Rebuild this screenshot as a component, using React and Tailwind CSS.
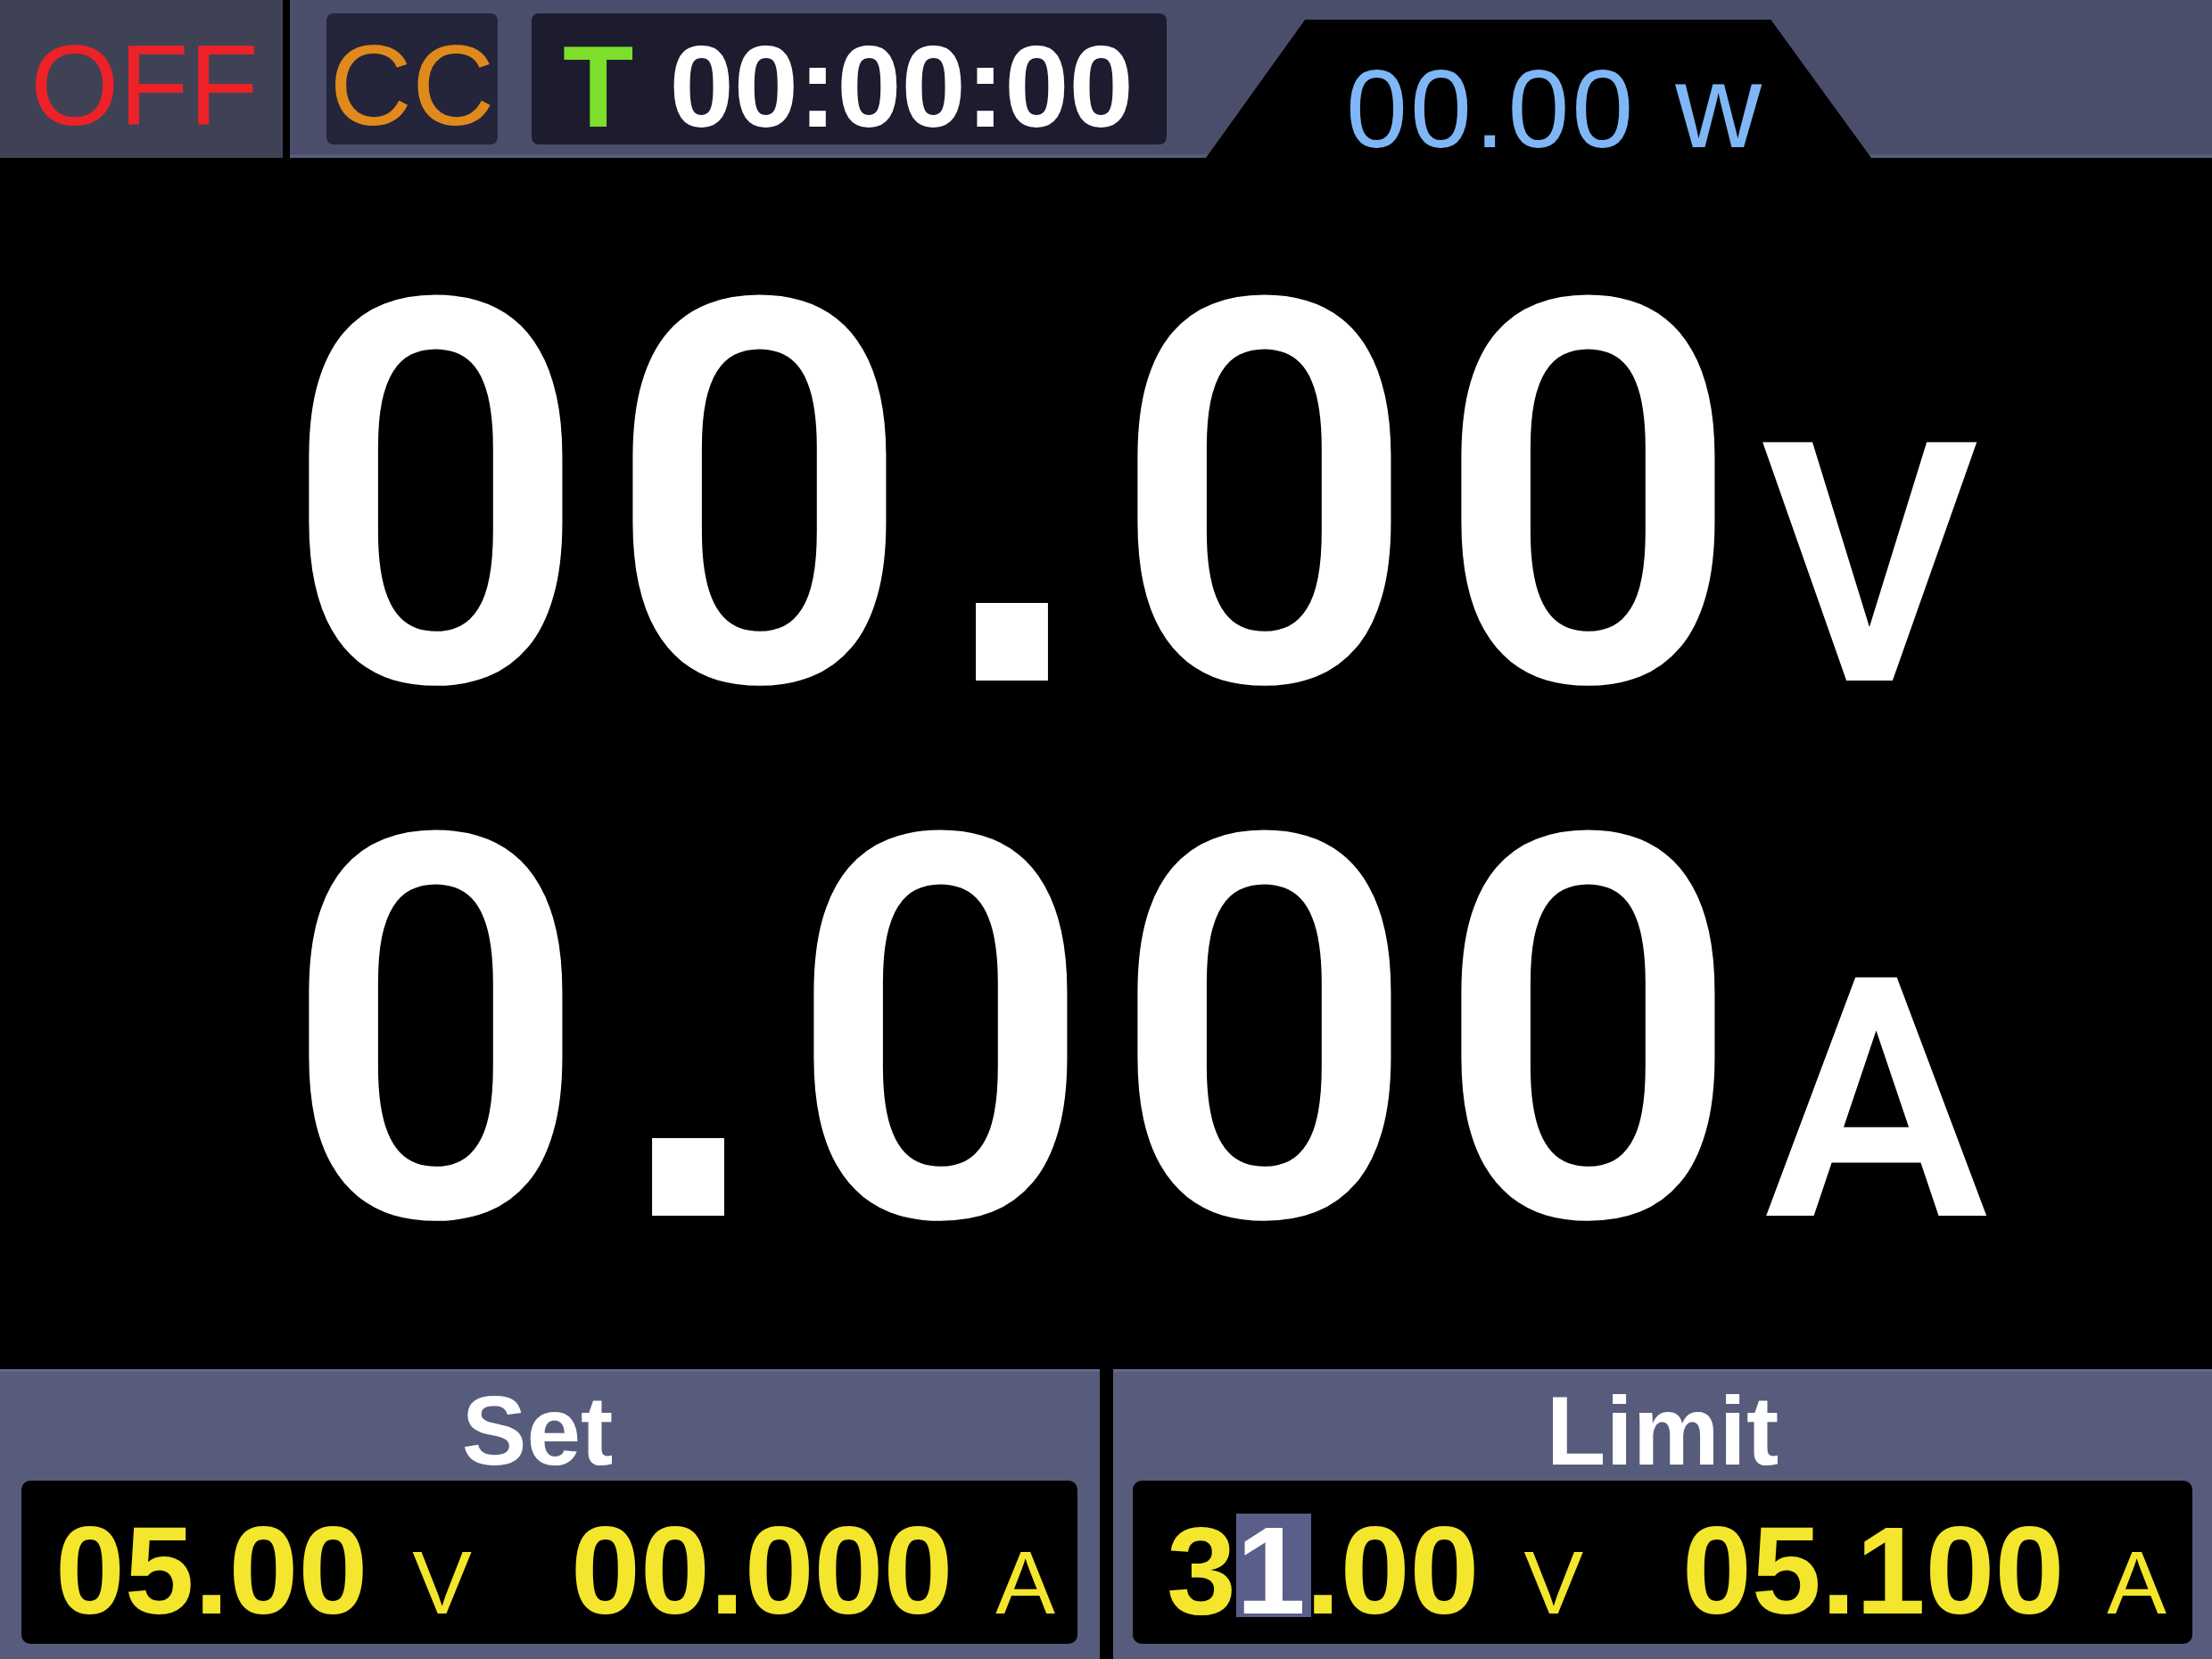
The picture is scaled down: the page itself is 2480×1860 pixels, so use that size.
import React from "react";

const sans = { fontFamily: '"Liberation Sans", Arial, sans-serif' };

function BigNum({ text, unit, unitMl }) {
  return (
    <div className="flex items-baseline h-[600px] leading-[600px] text-white" style={{ fontFamily: 'Roboto, "Liberation Sans", sans-serif' }}>
      {text.split("").map((c, i) =>
        c === "." ? (
          <span
            key={i}
            className="inline-block w-[203px] text-center text-[460px] font-bold"
            style={{ fontFamily: '"DejaVu Sans", sans-serif' }}
          >
            .
          </span>
        ) : (
          <span key={i} className="inline-block w-[363px] text-center text-[600px] font-semibold">
            {c}
          </span>
        )
      )}
      <span className={`text-[376px] font-semibold ${unitMl}`}>{unit}</span>
    </div>
  );
}

function Reading({ children }) {
  return (
    <div className="flex items-baseline pt-[31px] pl-[38px] text-[#f4e62c] font-bold" style={sans}>
      {children}
    </div>
  );
}

export default function App() {
  return (
    <div className="w-[2480px] h-[1860px] bg-black flex flex-col overflow-hidden" style={sans}>
      {/* Top bar */}
      <div className="h-[177px] flex shrink-0">
        <div className="w-[317px] h-full bg-[#3f4254] pl-[34px] pt-[32px]">
          <span className="text-[128px] leading-none text-[#ec2228]">OFF</span>
        </div>
        <div className="w-[8px] h-full bg-black" />
        <div className="flex-1 h-full bg-[#4b4e6b] flex items-start border-b-[4px] border-[#575b7d]">
          <div className="ml-[41px] mt-[15px] w-[192px] h-[147px] rounded-[8px] bg-[#24243a] flex justify-center pt-[17px]">
            <span className="text-[128px] leading-none text-[#e0891c]">CC</span>
          </div>
          <div className="ml-[38px] mt-[15px] w-[712px] h-[147px] rounded-[8px] bg-[#1c1c2e] flex pl-[35px] pt-[17px]">
            <span className="text-[130px] leading-none text-[#7ddf2b] font-bold">T</span>
            <span className="ml-[40px] text-[130px] leading-none text-white font-bold">00:00:00</span>
          </div>
          <div className="ml-[44px] mt-[22px] w-[746px] h-[155px] bg-black [clip-path:polygon(14.9%_0,84.9%_0,100%_100%,0_100%)] pl-[157px] pt-[30px]">
            <span className="text-[124px] leading-none text-[#7fb6f6] tracking-[3px]">
              00.00<span className="ml-[44px] text-[134px]">w</span>
            </span>
          </div>
        </div>
      </div>

      {/* Main readout */}
      <div className="h-[1358px] shrink-0 bg-black pl-[307px] pt-[81px] flex flex-col">
        <BigNum text="00.00" unit="V" unitMl="ml-[12px]" />
        <BigNum text="0.000" unit="A" unitMl="ml-[16px]" />
      </div>

      {/* Bottom panels */}
      <div className="flex-1 flex">
        <div className="w-[1233px] h-full bg-[#585c7c] border-t-[3px] border-[#63678b] flex flex-col">
          <div className="h-[122px] pt-[12px] pr-[28px] text-center text-white font-bold text-[109px] leading-none">Set</div>
          <div className="ml-[24px] mr-[25px] h-[183px] bg-black rounded-[10px]">
            <Reading>
              <span className="text-[140px] leading-none">05.00</span>
              <span className="ml-[50px] text-[100px] leading-none font-normal">V</span>
              <span className="ml-[111px] text-[140px] leading-none">00.000</span>
              <span className="ml-[48px] text-[100px] leading-none font-normal">A</span>
            </Reading>
          </div>
        </div>
        <div className="w-[15px] h-full bg-black" />
        <div className="flex-1 h-full bg-[#585c7c] border-t-[3px] border-[#63678b] flex flex-col">
          <div className="h-[122px] pt-[12px] text-center text-white font-bold text-[109px] leading-none">Limit</div>
          <div className="ml-[22px] mr-[22px] h-[183px] bg-black rounded-[10px]">
            <Reading>
              <span className="text-[140px] leading-none">
                3<span className="inline-block bg-[#5a5e8a] text-white leading-[104px] pt-[12px] pr-[6px] -mr-[6px]">1</span>.00
              </span>
              <span className="ml-[50px] text-[100px] leading-none font-normal">V</span>
              <span className="ml-[111px] text-[140px] leading-none">05.100</span>
              <span className="ml-[48px] text-[100px] leading-none font-normal">A</span>
            </Reading>
          </div>
        </div>
      </div>
    </div>
  );
}
